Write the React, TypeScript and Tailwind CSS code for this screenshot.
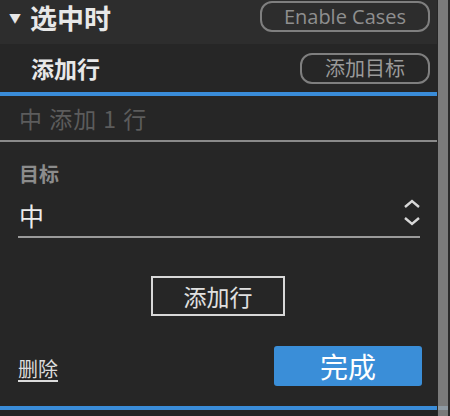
const font = { fontFamily: '"Noto Sans CJK SC", "Noto Sans", sans-serif' };

function Chevrons() {
  return (
    <svg width="18" height="28" viewBox="0 0 18 28" className="text-[#d8d8d8]">
      <path d="M2 8 L9 2 L16 8" fill="none" stroke="currentColor" strokeWidth="2.4" />
      <path d="M2 19 L9 25 L16 19" fill="none" stroke="currentColor" strokeWidth="2.4" />
    </svg>
  );
}

export default function App() {
  return (
    <div className="flex w-[450px] h-[416px] bg-[#262626] overflow-hidden" style={font}>
      <div className="w-[437px] flex flex-col">
        {/* section header */}
        <div className="h-[44px] bg-[#2d2d2d] flex items-start justify-between pl-[9px] pr-[7px]">
          <div className="flex items-center gap-[9px] -mt-[2px]">
            <span className="text-[12px] text-[#e6e6e6] leading-none">▼</span>
            <span className="text-[27px] font-bold text-[#e8e8e8] leading-[40px]">选中时</span>
          </div>
          <button className="mt-[1px] w-[170px] h-[31px] rounded-[12px] border-2 border-[#7f7f7f] text-[20px] text-[#8f8f8f] leading-none" style={{ fontFamily: '"Open Sans", sans-serif' }}>
            Enable Cases
          </button>
        </div>

        {/* action row */}
        <div className="h-[48px] flex items-center justify-between pl-[31px] pr-[7px]">
          <span className="text-[23px] font-bold text-[#e8e8e8] leading-[34px]">添加行</span>
          <button className="w-[130px] h-[31px] rounded-[12px] border-2 border-[#7f7f7f] text-[20px] text-[#9a9a9a] leading-none">
            添加目标
          </button>
        </div>
        <div className="h-[4px] bg-[#3a8cd8]" />

        <div className="h-[44px] flex items-center pl-[19px] text-[23px] tracking-[1px] text-[#5c5c5c]">中 添加 1 行</div>
        <div className="h-[2px] bg-[#8a8a8a]" />

        {/* target select */}
        <div className="pl-[18px] pr-[17px] pt-[20px]">
          <div className="text-[20px] font-bold text-[#8c8c8c] leading-[24px] pl-[1px]">目标</div>
          <div className="mt-[8px] h-[44px] flex items-center justify-between border-b-2 border-[#9a9a9a] pl-[1px]">
            <span className="text-[25px] text-[#ececec] leading-[36px]">中</span>
            <span className="pb-[4px] -mr-[1px]"><Chevrons /></span>
          </div>
        </div>

        <div className="flex justify-center mt-[38px] pr-[1px]">
          <button className="w-[134px] h-[40px] border-2 border-[#d8d8d8] text-[23px] text-[#e0e0e0] leading-none">
            添加行
          </button>
        </div>

        {/* footer */}
        <div className="flex items-center justify-between pl-[18px] pr-[15px] mt-[30px]">
          <a className="text-[20px] text-[#dcdcdc] underline underline-offset-[3px] mt-[6px] leading-[30px]">删除</a>
          <button className="w-[148px] h-[40px] rounded-[3px] bg-[#3a8ed8] text-[28px] text-white leading-none">
            完成
          </button>
        </div>
        <div className="h-[4px] bg-[#3a8cd8] mt-[20px]" />
        <div className="flex-1 bg-[#222]" />
      </div>

      {/* scroll track */}
      <div className="w-[1px]" />
      <div className="w-[10px] flex flex-col bg-[#7b7b7b]">
        <div className="h-[406px]" />
        <div className="h-[4px] bg-[#8f9aa3]" />
      </div>
      <div className="flex-1 bg-[#2a2a2a]" />
    </div>
  );
}
